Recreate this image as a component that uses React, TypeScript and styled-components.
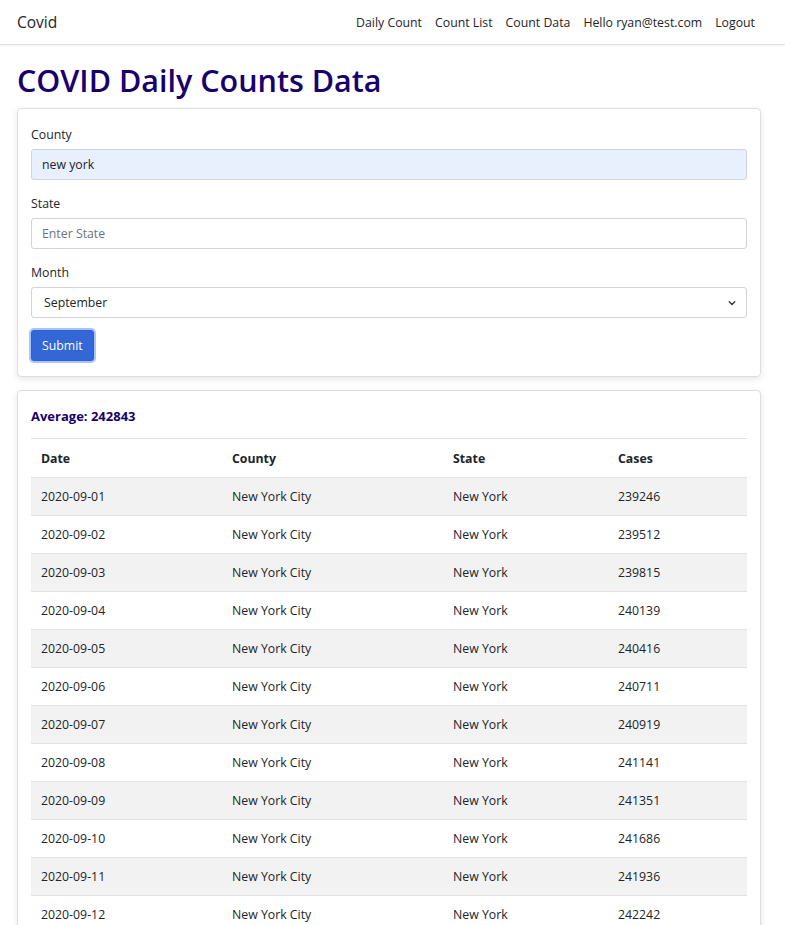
import React from "react";
import styled, { createGlobalStyle } from "styled-components";

const Global = createGlobalStyle`
  * { box-sizing: border-box; }
  body {
    margin: 0;
    background: #fff;
    font-family: "Open Sans", "Liberation Sans", sans-serif;
    font-size: 12.3px;
    color: #212529;
  }
`;

const Nav = styled.nav`
  height: 45px;
  display: flex;
  align-items: center;
  justify-content: space-between;
  padding: 0 17px;
  border-bottom: 1px solid #dfdfe3;
  box-shadow: 0 1px 4px rgba(0, 0, 0, 0.06);
`;

const Brand = styled.span`
  font-size: 15.5px;
  color: #212529;
`;

const NavLinks = styled.div`
  display: flex;
  gap: 13px;
  padding-right: 13px;
`;

const NavLink = styled.a`
  font-size: 12.3px;
  color: #212529;
  text-decoration: none;
`;

const Main = styled.main`
  padding: 0 24px 0 17px;
`;

const Title = styled.h1`
  margin: 16px 0 9px;
  font-size: 30.5px;
  font-weight: 600;
  line-height: 38px;
  color: #17006e;
`;

const Card = styled.section`
  border: 1px solid #dedede;
  border-radius: 4px;
  box-shadow: 0 2px 6px rgba(0, 0, 0, 0.1);
  padding: 17px 13px 15px 13px;
  margin-bottom: 13px;
`;

const Field = styled.div`
  margin-bottom: 15px;
`;

const Label = styled.label`
  display: block;
  margin-bottom: 6px;
  font-size: 12.3px;
  line-height: 17px;
`;

const Input = styled.input<{ $filled?: boolean }>`
  display: block;
  width: 100%;
  height: 31px;
  padding: 0 10px;
  font-family: inherit;
  font-size: 12.3px;
  color: #212529;
  background: ${(p) => (p.$filled ? "#e8f0fe" : "#fff")};
  border: 1px solid #ced4da;
  border-radius: 3px;
  outline: none;
  &::placeholder { color: #6c757d; }
`;

const Select = styled.select`
  display: block;
  width: 100%;
  height: 31px;
  padding: 0 12px;
  font-family: inherit;
  font-size: 12.3px;
  color: #212529;
  background: #fff url("data:image/svg+xml,%3csvg xmlns='http://www.w3.org/2000/svg' viewBox='0 0 16 16'%3e%3cpath fill='none' stroke='%23343a40' stroke-linecap='round' stroke-linejoin='round' stroke-width='2.8' d='M2.5 5.5l5.5 5.5 5.5-5.5'/%3e%3c/svg%3e") no-repeat right 9px center / 10px 8px;
  border: 1px solid #ced4da;
  border-radius: 3px;
  appearance: none;
  outline: none;
`;

const Button = styled.button`
  display: block;
  height: 31px;
  padding: 0 10px;
  font-family: inherit;
  font-size: 12.3px;
  color: #fff;
  background: #3366d6;
  border: 1px solid #2f5fcc;
  border-radius: 3px;
  box-shadow: 0 0 0 2px #a9c4f6;
  margin-top: -3px;
`;

const Average = styled.h5`
  margin: 0 0 14px;
  font-size: 13px;
  line-height: 16px;
  font-weight: 700;
  color: #17006e;
`;

const Table = styled.table`
  width: 100%;
  border-collapse: collapse;
  border-top: 1px solid #dee2e6;
`;

const Th = styled.th<{ $w?: number }>`
  text-align: left;
  font-weight: 700;
  height: 39px;
  padding: 0 10px;
  width: ${(p) => (p.$w ? `${p.$w}px` : "auto")};
  border-bottom: 1px solid #dee2e6;
`;

const Row = styled.tr<{ $striped: boolean }>`
  background: ${(p) => (p.$striped ? "#f2f2f2" : "#fff")};
`;

const Td = styled.td`
  height: 38px;
  padding: 0 10px;
  border-bottom: 1px solid #dee2e6;
`;

const cases = [
  239246, 239512, 239815, 240139, 240416, 240711, 240919, 241141, 241351,
  241686, 241936, 242242, 242500, 242805,
];

export default function App() {
  return (
    <>
      <Global />
      <Nav>
        <Brand>Covid</Brand>
        <NavLinks>
          <NavLink href="#">Daily Count</NavLink>
          <NavLink href="#">Count List</NavLink>
          <NavLink href="#">Count Data</NavLink>
          <NavLink href="#">Hello ryan@test.com</NavLink>
          <NavLink href="#">Logout</NavLink>
        </NavLinks>
      </Nav>
      <Main>
        <Title>COVID Daily Counts Data</Title>
        <Card>
          <Field>
            <Label>County</Label>
            <Input $filled defaultValue="new york" />
          </Field>
          <Field>
            <Label>State</Label>
            <Input placeholder="Enter State" />
          </Field>
          <Field>
            <Label>Month</Label>
            <Select defaultValue="September">
              <option>September</option>
            </Select>
          </Field>
          <Button>Submit</Button>
        </Card>
        <Card>
          <Average>Average: 242843</Average>
          <Table>
            <thead>
              <tr>
                <Th $w={191}>Date</Th>
                <Th $w={221}>County</Th>
                <Th $w={165}>State</Th>
                <Th>Cases</Th>
              </tr>
            </thead>
            <tbody>
              {cases.map((c, i) => (
                <Row key={i} $striped={i % 2 === 0}>
                  <Td>{`2020-09-${String(i + 1).padStart(2, "0")}`}</Td>
                  <Td>New York City</Td>
                  <Td>New York</Td>
                  <Td>{c}</Td>
                </Row>
              ))}
            </tbody>
          </Table>
        </Card>
      </Main>
    </>
  );
}
